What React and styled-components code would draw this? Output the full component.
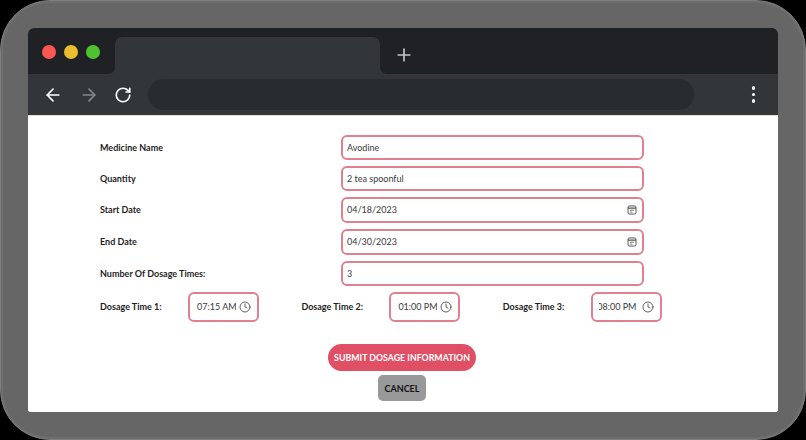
import React from "react";
import styled, { createGlobalStyle } from "styled-components";
import { ArrowLeft, ArrowRight, RotateCw, Plus, Clock } from "lucide-react";

const Global = createGlobalStyle`
  html, body { margin: 0; padding: 0; background: #000; }
  body { width: 806px; height: 440px; overflow: hidden; font-family: Lato, "Liberation Sans", sans-serif; }
`;
const Device = styled.div`
  box-sizing: border-box; width: 806px; height: 440px;
  background: #666; border-radius: 50px; border: 1px solid #7d7d7d;
  padding: 27px; box-shadow: inset 0 0 0 2px #6e6e6e;
`;
const Win = styled.div`
  height: 384px; display: flex; flex-direction: column; border-radius: 6px 6px 3px 3px;
  overflow: hidden; background: #fff;
`;
const Strip = styled.div`display: flex; height: 46px; background: #323639; flex: none;`;
const Dots = styled.div`
  width: 87px; display: flex; align-items: center; gap: 8px; padding: 2px 0 0 14px; box-sizing: border-box;
  background: #202124; border-bottom-right-radius: 7px;
`;
const Dot = styled.span`width: 14px; height: 14px; border-radius: 50%; background: ${p => p.$c};`;
const TabSlot = styled.div`width: 265px; background: #202124; display: flex; align-items: flex-end;`;
const Tab = styled.div`width: 100%; height: 37px; background: #323639; border-radius: 7px 7px 0 0;`;
const StripRest = styled.div`
  flex: 1; background: #202124; border-bottom-left-radius: 7px; display: flex; align-items: center;
  padding: 8px 0 0 14px; color: #c4c5c6;
`;
const Toolbar = styled.div`
  height: 42px; flex: none; display: flex; align-items: center; background: #323639; padding: 0 0 0 15px;
  border-bottom: 1px solid #e8e2c8; box-sizing: border-box; color: #fff;
`;
const NavSlot = styled.span`width: 35.5px; display: flex; color: ${p => p.$dim ? "#85888a" : "#fff"};`;
const Address = styled.div`flex: none; width: 546px; height: 31px; border-radius: 16px; background: #292c2f; margin-left: -2px;`;
const Menu = styled.div`margin-left: auto; margin-right: 23px; display: flex; flex-direction: column; gap: 3px;`;
const MenuDot = styled.i`display: block; width: 3.4px; height: 3.4px; border-radius: 50%; background: #fff;`;
const Page = styled.div`flex: 1; background: #fff; padding: 19px 72px 0; color: #1c1c1c;`;
const Row = styled.div`display: flex; align-items: center; height: ${p => p.$h || 25}px; margin-bottom: ${p => p.$gap ?? 6}px;`;
const Label = styled.label`font-size: 9px; font-weight: 700; width: 241px; flex: none; color: #1e1e1e; padding-bottom: 1px;`;
const Field = styled.div`
  width: 303px; height: 100%; box-sizing: border-box; border: 2px solid #e0808e; border-radius: 6px;
  display: flex; align-items: center; justify-content: space-between; padding: 0 5px 1px 4px;
  font-size: 9px; color: #3a3a3a;
`;
const TimeRow = styled.div`display: flex; height: 30px; margin-bottom: 22px;`;
const TimeGroup = styled.div`width: 201.4px; flex: none; display: flex; align-items: center;`;
const TimeLabel = styled.label`font-size: 9px; font-weight: 700; width: 88px; flex: none; color: #1e1e1e; padding-bottom: 1px;`;
const TimeBox = styled.div`
  width: 71px; height: 30px; box-sizing: border-box; border: 2px solid #e0808e; border-radius: 6px;
  display: flex; align-items: center; padding: 0 6px 0 6px; gap: 3px; color: #3a3a3a;
`;
const TimeClip = styled.span`flex: 1; overflow: hidden; white-space: nowrap; font-size: 9px; padding-bottom: 1px;`;
const TimeText = styled.span`display: inline-block; margin-left: ${p => p.$shift ?? 1}px;`;
const Actions = styled.div`display: flex; flex-direction: column; align-items: center; gap: 4px; margin-left: 30px; width: 544px;`;
const Submit = styled.button`
  width: 148px; height: 27px; border: 0; border-radius: 14px; background: #e04f64; color: #fff; padding: 0;
  font: 700 8.8px Lato, sans-serif; white-space: nowrap;
`;
const Cancel = styled.button`
  width: 48px; height: 26px; border: 0; border-radius: 5px; background: #999; color: #141414; padding: 0;
  font: 700 9px Lato, sans-serif;
`;
const CalIcon = () => (
  <svg width="10" height="10" viewBox="0 0 10 10" fill="none" stroke="#555" strokeWidth="1">
    <rect x="1" y="1" width="8" height="8" rx="1.2" />
    <path d="M1 3.2h8" strokeWidth="1.3" />
    <path d="M2.8 5.2h4.4M2.8 7h2.6" strokeWidth=".8" />
  </svg>
);

export default function App() {
  return (
    <Device>
      <Global />
      <Win>
        <Strip>
          <Dots><Dot $c="#fc5753" /><Dot $c="#e9bd2b" /><Dot $c="#4ec32f" /></Dots>
          <TabSlot><Tab /></TabSlot>
          <StripRest><Plus size={20} strokeWidth={2} /></StripRest>
        </Strip>
        <Toolbar>
          <NavSlot><ArrowLeft size={20} strokeWidth={2} /></NavSlot>
          <NavSlot $dim><ArrowRight size={20} strokeWidth={2} /></NavSlot>
          <NavSlot><RotateCw size={18} strokeWidth={2.2} /></NavSlot>
          <Address />
          <Menu><MenuDot /><MenuDot /><MenuDot /></Menu>
        </Toolbar>
        <Page>
          <Row><Label>Medicine Name</Label><Field>Avodine</Field></Row>
          <Row><Label>Quantity</Label><Field>2 tea spoonful</Field></Row>
          <Row $h={26}><Label>Start Date</Label><Field>04/18/2023<CalIcon /></Field></Row>
          <Row $h={26}><Label>End Date</Label><Field>04/30/2023<CalIcon /></Field></Row>
          <Row><Label>Number Of Dosage Times:</Label><Field>3</Field></Row>
          <TimeRow>
            <TimeGroup><TimeLabel>Dosage Time 1:</TimeLabel><TimeBox><TimeClip><TimeText>07:15 AM</TimeText></TimeClip><Clock size={12} strokeWidth={1.6} /></TimeBox></TimeGroup>
            <TimeGroup><TimeLabel>Dosage Time 2:</TimeLabel><TimeBox><TimeClip><TimeText>01:00 PM</TimeText></TimeClip><Clock size={12} strokeWidth={1.6} /></TimeBox></TimeGroup>
            <TimeGroup><TimeLabel>Dosage Time 3:</TimeLabel><TimeBox><TimeClip><TimeText $shift={-1.5}>08:00 PM</TimeText></TimeClip><Clock size={12} strokeWidth={1.6} /></TimeBox></TimeGroup>
          </TimeRow>
          <Actions>
            <Submit>SUBMIT DOSAGE INFORMATION</Submit>
            <Cancel>CANCEL</Cancel>
          </Actions>
        </Page>
      </Win>
    </Device>
  );
}
